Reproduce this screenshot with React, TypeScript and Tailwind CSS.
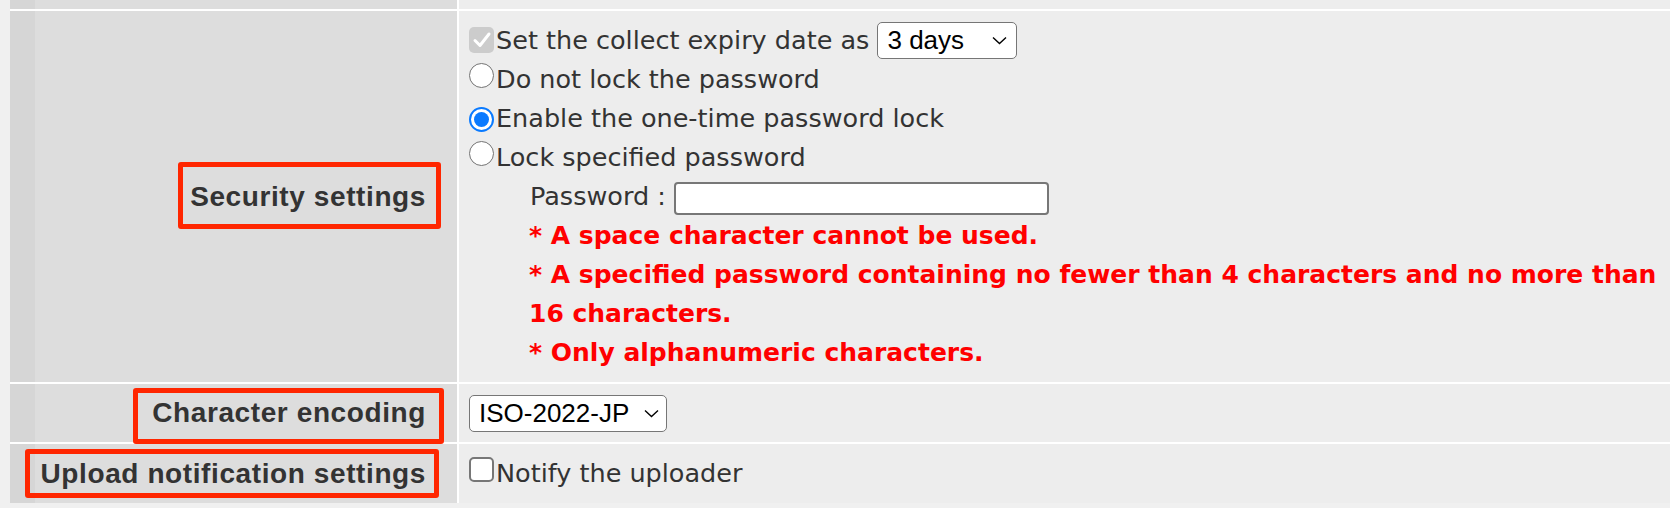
import type { ReactNode } from "react";

const labelFont = "font-['Liberation_Sans',Arial,sans-serif] font-bold text-[28px] leading-none tracking-[0.6px] text-[#333]";
const selectFont = "font-['Liberation_Sans',Arial,sans-serif] text-[26px] leading-none text-black";

function Row({ label, className, children }: { label?: string; className: string; children?: ReactNode }) {
  return (
    <div className={`flex ${className}`}>
      <div className="w-[25px] shrink-0 bg-[#d6d6d6]" />
      <div className="w-[422px] shrink-0 bg-[#dddddd] flex items-center justify-end pr-[31px]">
        {label && <span className={labelFont}>{label}</span>}
      </div>
      <div className="flex-1 ml-[2px] bg-[#ededed]">{children}</div>
    </div>
  );
}

function Chevron() {
  return (
    <svg width="15" height="9" viewBox="0 0 15 9" fill="none">
      <path d="M1 1.5 L7.5 7.5 L14 1.5" stroke="#000" strokeWidth="1.4" />
    </svg>
  );
}

function Radio({ checked }: { checked?: boolean }) {
  if (checked) {
    return (
      <span className="inline-flex align-baseline w-[25px] h-[25px] mr-[2px] rounded-full border-2 border-[#0a7aff] bg-white items-center justify-center">
        <span className="w-[15px] h-[15px] rounded-full bg-[#0a7aff]" />
      </span>
    );
  }
  return <span className="inline-block align-baseline w-[25px] h-[25px] mr-[2px] rounded-full border-[1.5px] border-[#737373] bg-white" />;
}

export default function App() {
  return (
    <div className="relative w-full h-[508px] overflow-hidden bg-[#f0f0f0] font-['DejaVu_Sans',sans-serif] text-[#333]">
      <div className="ml-[10px] flex flex-col gap-[2px] bg-white">
        <Row className="h-[9px]" />

        <Row label="Security settings" className="h-[371px]">
          <div className="pl-[10px] pt-[10px] text-[25.5px] leading-[39px] whitespace-nowrap">
            <div className="h-[39px]">
              <span className="inline-flex align-baseline w-[25px] h-[26px] mr-[2px] rounded-[5px] bg-[#cccccc] items-center justify-center">
                <svg width="20" height="18" viewBox="0 0 20 18" fill="none">
                  <path d="M3 9.5 L8 14.5 L17 3" stroke="#fff" strokeWidth="3" strokeLinecap="round" strokeLinejoin="round" />
                </svg>
              </span>
              Set the collect expiry date as{" "}
              <span className="inline-flex align-baseline items-center justify-between w-[140px] h-[37px] pl-[9px] pr-[9px] bg-white border-[1.5px] border-[#767676] rounded-[5px]">
                <span className={selectFont}>3 days</span>
                <Chevron />
              </span>
            </div>
            <div>
              <Radio />
              Do not lock the password
            </div>
            <div>
              <Radio checked />
              Enable the one-time password lock
            </div>
            <div>
              <Radio />
              Lock specified password
            </div>
            <div className="pl-[61px]">
              Password :{" "}
              <span className="inline-block align-[-10px] w-[375px] h-[33px] bg-white border-2 border-[#777777] rounded-[4px]" />
            </div>
            <div className="pl-[60px] text-[25px] font-bold text-[#ff0000]">
              <div>* A space character cannot be used.</div>
              <div>* A specified password containing no fewer than 4 characters and no more than</div>
              <div>16 characters.</div>
              <div>* Only alphanumeric characters.</div>
            </div>
          </div>
        </Row>

        <Row label="Character encoding" className="h-[58px]">
          <div className="h-full flex items-center pl-[10px]">
            <span className="inline-flex items-center justify-between w-[198px] h-[37px] pl-[9px] pr-[7px] bg-white border-[1.5px] border-[#767676] rounded-[5px]">
              <span className={selectFont}>ISO-2022-JP</span>
              <Chevron />
            </span>
          </div>
        </Row>

        <Row label="Upload notification settings" className="h-[59px]">
          <div className="h-full flex items-center pl-[10px] text-[25.5px] leading-[39px] whitespace-nowrap">
            <div>
              <span className="inline-block align-baseline w-[25px] h-[25px] mr-[2px] rounded-[5px] border-2 border-[#777777] bg-white" />
              Notify the uploader
            </div>
          </div>
        </Row>
      </div>

      <div className="absolute left-[178px] top-[162px] w-[263px] h-[67px] border-[5px] border-[#ff2600] rounded-[3px]" />
      <div className="absolute left-[133px] top-[388px] w-[311px] h-[56px] border-[5px] border-[#ff2600] rounded-[3px]" />
      <div className="absolute left-[25px] top-[449px] w-[414px] h-[49px] border-[5px] border-[#ff2600] rounded-[3px]" />
    </div>
  );
}
